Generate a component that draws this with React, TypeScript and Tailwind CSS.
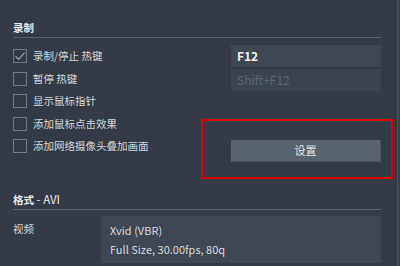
import React from "react";

const font = { fontFamily: '"Noto Sans CJK SC", "Noto Sans", sans-serif' };

function Check({ checked }: { checked?: boolean }) {
  return (
    <div className="w-[14px] h-[14px] border border-[#737a84] flex items-center justify-center shrink-0">
      {checked && (
        <svg width="12" height="12" viewBox="0 0 12 12">
          <path d="M1.5 6.2 L4.6 9.3 L10.6 2.6" fill="none" stroke="#9ea4ac" strokeWidth="1.2" />
        </svg>
      )}
    </div>
  );
}

function Row({ label, checked }: { label: string; checked?: boolean }) {
  return (
    <div className="h-[22.5px] flex items-center gap-[6px]">
      <Check checked={checked} />
      <span className="text-[10.5px] text-[#d3d7db] leading-none whitespace-nowrap">{label}</span>
    </div>
  );
}

export default function App() {
  return (
    <div className="w-[400px] h-[266px] bg-[#343b46] flex overflow-hidden relative" style={font}>
      <div className="flex-1 pl-[13px] pr-[16px] pt-[19px] flex flex-col">
        <div className="h-[19px] border-b border-[#58616c] text-[10.5px] font-bold text-[#e8eaec] leading-[17px]">
          录制
        </div>
        <div className="flex mt-[7px]">
          <div className="w-[218px] flex flex-col">
            <Row label="录制/停止 热键" checked />
            <Row label="暂停 热键" />
            <Row label="显示鼠标指针" />
            <Row label="添加鼠标点击效果" />
            <Row label="添加网络摄像头叠加画面" />
          </div>
          <div className="flex-1 flex flex-col">
            <div className="h-[22px] bg-[#3f4752] pl-[6px] flex items-center text-[12px] font-semibold text-[#eef0f2]">
              F12
            </div>
            <div className="h-[22px] mt-[1.5px] bg-[#3c4450] pl-[6px] flex items-center text-[12px] text-[#5f6873]">
              Shift+F12
            </div>
            <div className="h-[22px] mt-[49px] bg-[#58636f] border-b border-r border-[#4a535e] flex items-center justify-center text-[11px] text-[#e2e5e8]">
              设置
            </div>
          </div>
        </div>
        <div className="h-[19px] mt-[29px] border-b border-[#58616c] text-[10.5px] text-[#e8eaec] leading-[17px] whitespace-nowrap">
          <span className="font-bold">格式</span>
          <span className="text-[11.5px]"> - AVI</span>
        </div>
        <div className="flex mt-[6px]">
          <div className="w-[88px] pt-[3px] text-[10.5px] text-[#d3d7db] leading-[19px]">视频</div>
          <div className="flex-1 h-[47px] bg-[#3f4752] pl-[9px] pt-[5px] text-[11px] text-[#d8dbdf] leading-[19px]">
            <div>Xvid (VBR)</div>
            <div>Full Size, 30.00fps, 80q</div>
          </div>
        </div>
      </div>
      <div className="w-[3px] flex">
        <div className="w-[1px] bg-[#4b535e]" />
        <div className="w-[2px] bg-[#3a414b]" />
      </div>
      <div className="absolute left-[201px] top-[119px] w-[192px] h-[60px] border-2 border-[#e00000]" />
    </div>
  );
}
